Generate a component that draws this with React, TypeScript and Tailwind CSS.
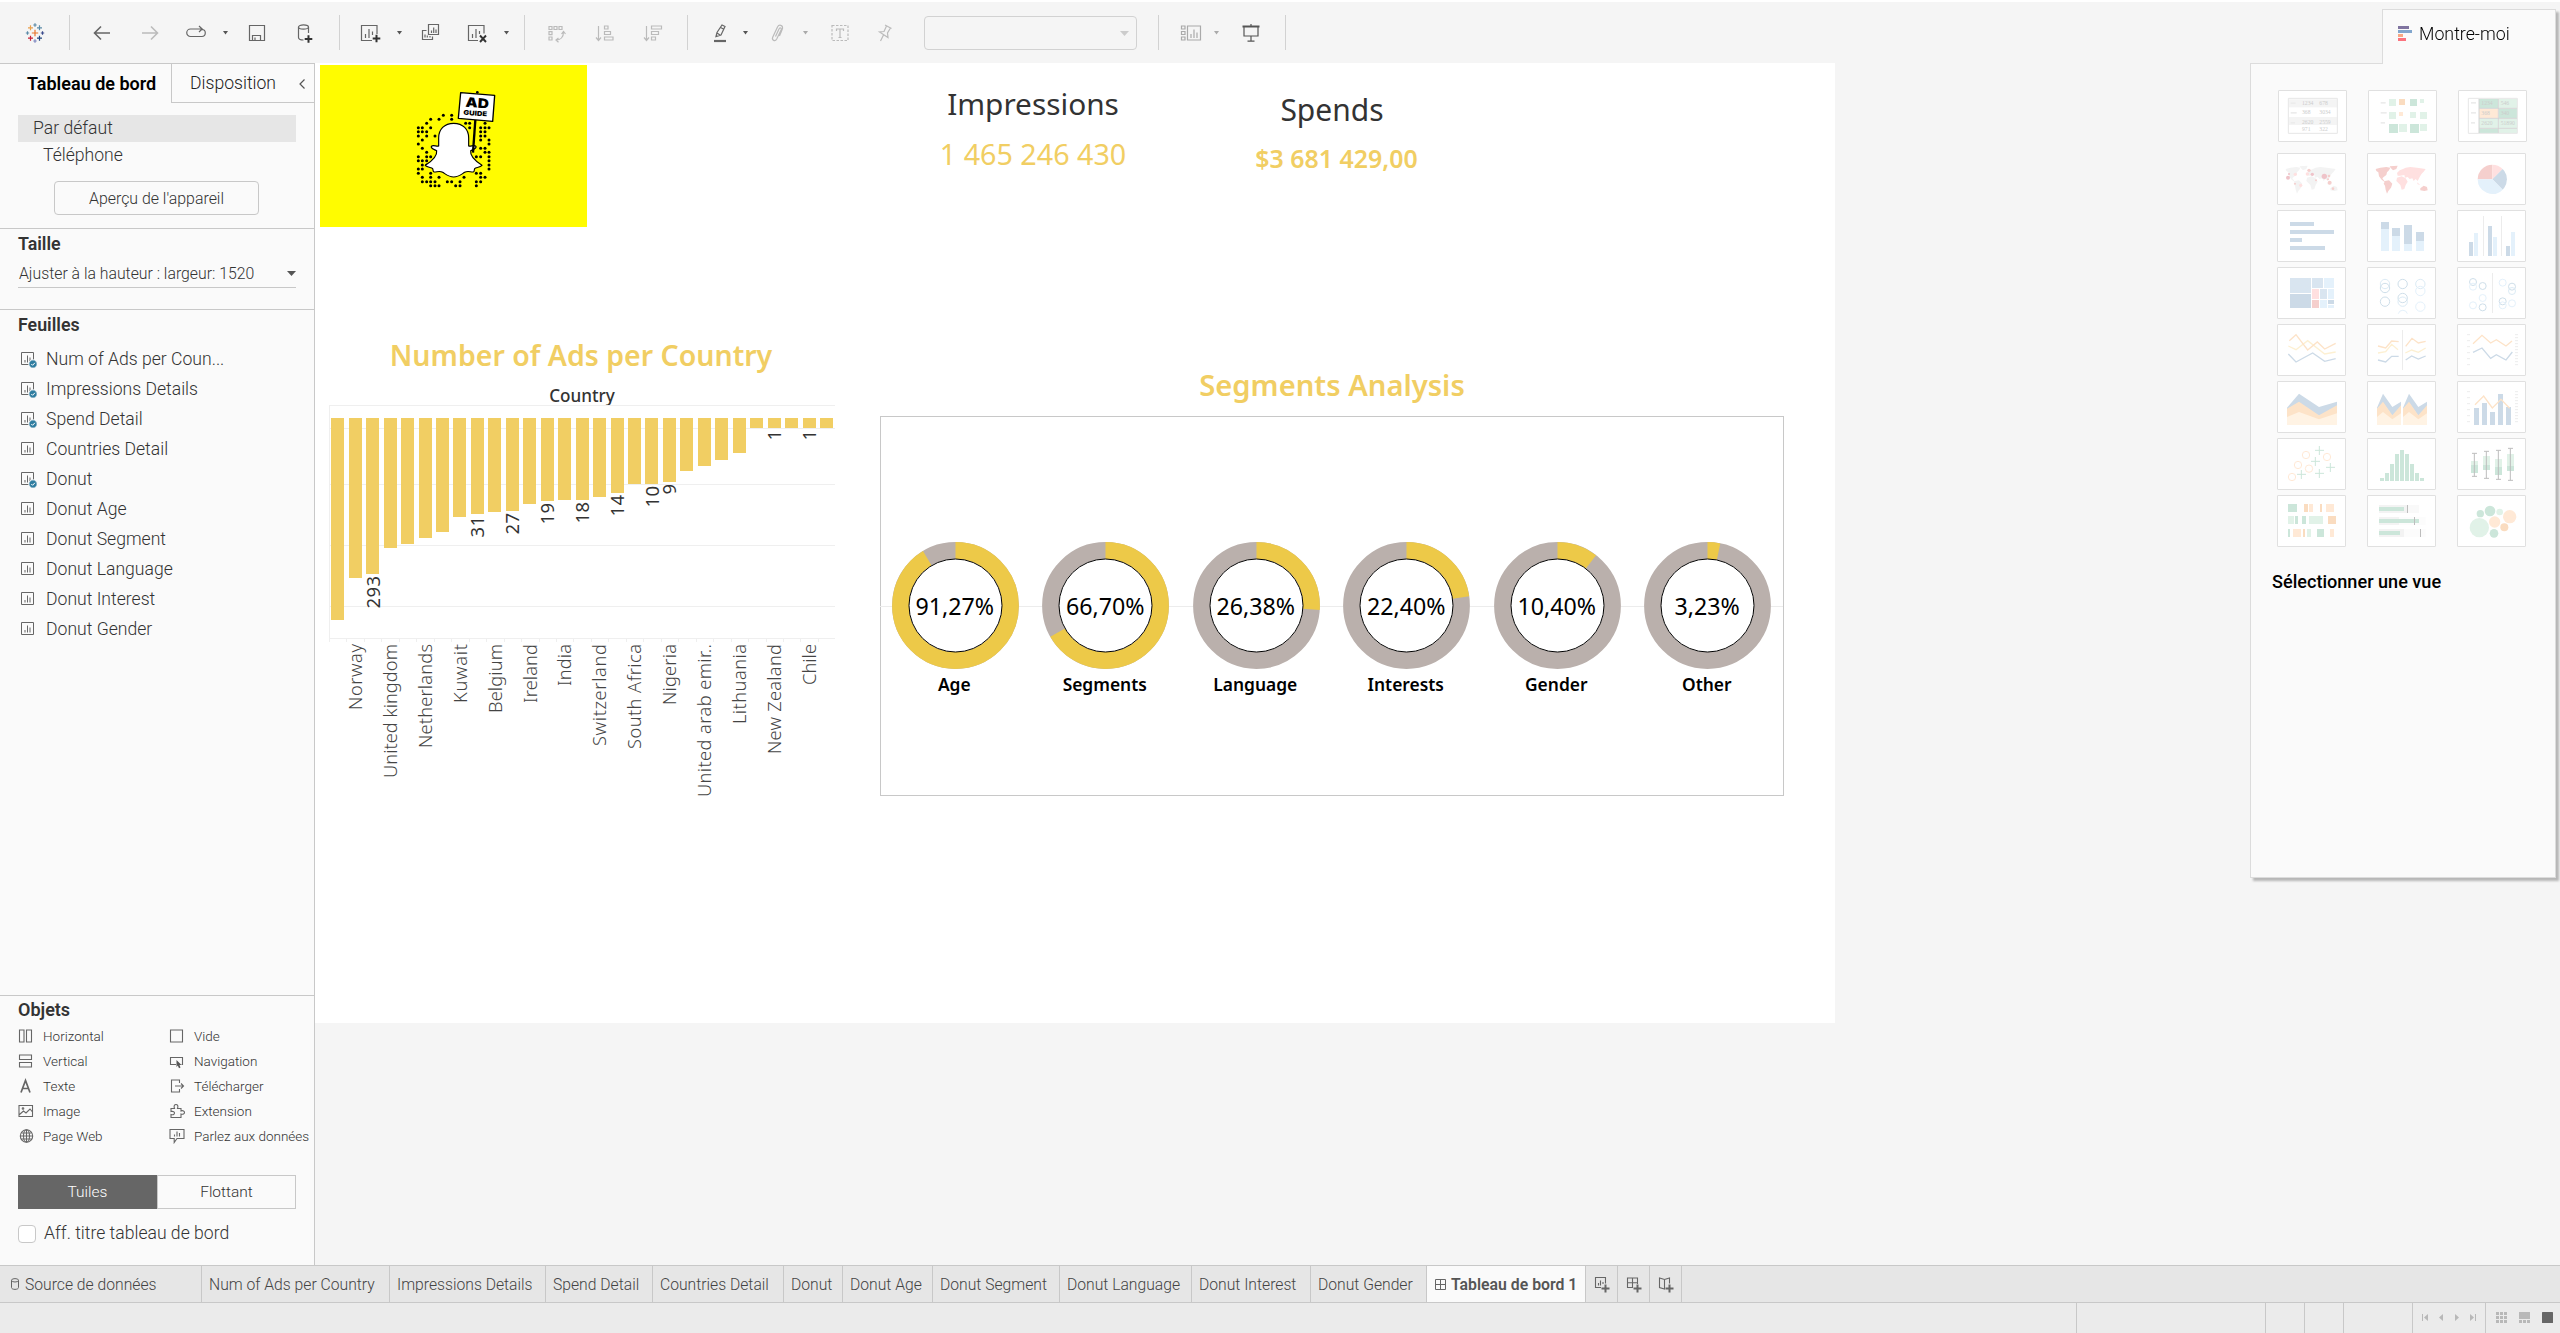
import React from "react";

type Kids = { children?: React.ReactNode };

/* ---------- toolbar ---------- */

const Sep = ({ className }: { className: string }) => (
  <div className={`h-[35px] w-px shrink-0 bg-[#d2d2d2] ${className}`} />
);

const Caret = ({ className, color = "#555" }: { className: string; color?: string }) => (
  <svg className={`h-1 w-[7px] shrink-0 ${className}`} viewBox="0 0 7 4">
    <path d="M1 0h5L3.5 3.6z" fill={color} />
  </svg>
);

function Ico({ className, w = 20, color = "#666", children }: Kids & { className: string; w?: number; color?: string }) {
  return (
    <svg
      className={`shrink-0 ${className}`}
      width={w}
      height={20}
      viewBox={`0 0 ${w} 20`}
      fill="none"
      stroke={color}
      strokeWidth={1.2}
    >
      {children}
    </svg>
  );
}

const plus = (x: number, y: number, r: number) => `M${x - r} ${y}h${2 * r}M${x} ${y - r}v${2 * r}`;

function Toolbar() {
  return (
    <div className="flex h-[61px] items-center bg-[#f5f5f5]">
      <Ico className="ml-[25px]">
        <path d={plus(10, 10, 3.2)} stroke="#e8762d" />
        <path d={plus(5.5, 4.8, 2.5)} stroke="#e9a04d" />
        <path d={plus(14.5, 4.8, 2.5)} stroke="#5b8ba8" />
        <path d={plus(5.5, 15.2, 2.5)} stroke="#c72035" />
        <path d={plus(14.5, 15.2, 2.5)} stroke="#1f447e" />
        <path d={plus(10, 2, 1.7)} stroke="#5b8ba8" />
        <path d={plus(10, 18, 1.7)} stroke="#7c86c0" />
        <path d={plus(2.5, 10, 1.7)} stroke="#5b8ba8" />
        <path d={plus(17.5, 10, 1.7)} stroke="#3a4a8c" />
      </Ico>
      <Sep className="ml-[24px]" />
      <Ico className="ml-[22px]">
        <path d="M18 10H2.5M9 3.5L2.5 10L9 16.5" strokeWidth={1.6} />
      </Ico>
      <Ico className="ml-[28px]" color="#bbb">
        <path d="M2 10h15.500M11 3.500L17.500 10L11 16.500" strokeWidth={1.6} />
      </Ico>
      <Ico className="ml-[26px]">
        <path d="M5 13.500H4.500A3.500 3.500 0 0 1 4.500 6H16M13 3l3.200 3L13 9M16 6.500a3.500 3.500 0 0 1 -.5 7H5" />
      </Ico>
      <Caret className="ml-[16px]" />
      <Ico className="ml-[18px]">
        <path d="M2.500 2.500h15v15h-15zM5.500 17.500v-5h8v5M8 17v-2.500" />
      </Ico>
      <Ico className="ml-[28px]">
        <ellipse cx="8.500" cy="4" rx="5" ry="2.200" />
        <path d="M3.500 4v10.500c0 1.500 2 2.500 5 2.500M13.500 4v6" />
        <path d={plus(13.500, 16, 3.8)} strokeWidth={2} stroke="#333" />
      </Ico>
      <Sep className="ml-[24px]" />
      <Ico className="ml-[20px]" w={22}>
        <path d="M12 17.500H1.500v-15h15.500v8.500M5.500 15v-4M9 15V6M12.500 12V8.500" />
        <path d={plus(16.500, 15.500, 3.8)} strokeWidth={2} stroke="#333" />
      </Ico>
      <Caret className="ml-[14px]" />
      <Ico className="ml-[18px]">
        <path d="M7.500 1.500h10v10h-10zM10.500 10V7.500M12.700 10V4.500M15 10V6.500M5.500 7.500h-4v9h10v-3M4 14.500v-3M6.300 14.500v-2M9 14.500v-1.500" />
      </Ico>
      <Ico className="ml-[26px]" w={22}>
        <path d="M11 17.500H1.500v-15h15.500v8M5.500 15v-4M9 15V6M12.500 11V8" />
        <path d="M13 12.500l6 6.500M19 12.500l-6 6.500" strokeWidth={1.900} stroke="#333" />
      </Ico>
      <Caret className="ml-[14px]" />
      <Sep className="ml-[14px]" />
      <Ico className="ml-[22px]" color="#bbb">
        <path d="M2 3.500h3v3h-3zM7 3.500h3v3h-3zM12 3.500h3v3h-3zM2 8.700h3v3h-3zM2 14h3v3h-3zM16.500 9c0 5-3 8-7.500 8M14.500 11l2-2.500l2 2.500M11.500 15L9 17l2.500 2.300" />
      </Ico>
      <Ico className="ml-[28px]" color="#bbb">
        <path d="M3.500 3v14M1 14.500l2.500 3l2.500-3M9.500 3h3.500v3h-3.500zM9.500 8.500h6v3h-6zM9.500 14h8.500v3h-8.500z" />
      </Ico>
      <Ico className="ml-[28px]" color="#bbb">
        <path d="M3.500 3v14M1 14.500l2.500 3l2.500-3M8.500 3h10v3h-10zM8.500 8.500h7v3h-7zM8.500 14h4v3h-4z" />
      </Ico>
      <Sep className="ml-[24px]" />
      <Ico className="ml-[23px]" w={18}>
        <path d="M5 13.500l1-4L11 2l3 1.500l-4 8.500zM6 10l3 2M9.500 4.500l3 1.500" />
        <path d="M3 18h12" strokeWidth={2.200} />
      </Ico>
      <Caret className="ml-[13px]" />
      <Ico className="ml-[19px]" w={18} color="#bbb">
        <path d="M7.500 13.500L11 6c.8-2 2.800-1 2.200.8L8.700 16c-1.600 3-5.200 1.200-4-1.700L9.500 4c1.500-3 5.500-2 5 1.500c-.3 1.700-2 5-3 7.500" />
      </Ico>
      <Caret className="ml-[16px]" color="#aaa" />
      <Ico className="ml-[21px]" color="#bbb">
        <path d="M2 2.500h16v15h-16z" strokeDasharray="2.500 1.500" />
        <path d="M6.500 8V6h7v2M10 6v8.500M8.500 14.500h3" />
      </Ico>
      <Ico className="ml-[26px]" w={18} color="#bbb">
        <path d="M9 2l6.500 3.500M10.500 3L8 8.500L3.500 9l8.500 5.500l-.5-4.500l3-5M7.500 12L4.500 18" />
      </Ico>
      <div className="ml-[30px] mt-px flex h-[34px] w-[213px] items-center justify-end rounded-sm border border-[#d2d2d2] pr-[7px]">
        <svg className="h-[5px] w-[9px]" viewBox="0 0 9 5">
          <path d="M0 0h9L4.500 5z" fill="#ccc" />
        </svg>
      </div>
      <Sep className="ml-[21px]" />
      <Ico className="ml-[21px]" w={22} color="#aaa">
        <path d="M1.500 3h3.500v3h-3.500zM1.500 8.500h3.500v3h-3.500zM1.500 14h3.500v3h-3.500zM7.500 3h13v14h-13zM11 15v-4M14 15V6.500M17 15v-5.500" />
      </Ico>
      <Caret className="ml-[11px]" color="#aaa" />
      <Ico className="ml-[21px]" color="#555">
        <path d="M1.500 3.500h17" strokeWidth={2} />
        <path d="M10 1v2M3 4v9h14V4M10 13v5M6.500 18.200h7" />
      </Ico>
      <Sep className="ml-[24px]" />
    </div>
  );
}

/* ---------- left side ---------- */

const SheetIcon = ({ used }: { used?: boolean }) => (
  <svg className="mr-[9px] h-[18px] w-[17px] shrink-0" viewBox="0 0 17 18" fill="none" stroke="#666">
    <path d="M1.500 2.500h12v12h-12z" />
    <path d="M5 12.500v-2.500M7.500 12.500v-7M10 12.500v-5" />
    {used && (
      <>
        <circle cx="13" cy="14" r="4.200" fill="#2f7da0" stroke="#fafafa" />
        <path d="M11.300 14l1.300 1.300l2.300-2.500" stroke="#fff" />
      </>
    )}
  </svg>
);

const sheets: [string, boolean][] = [
  ["Num of Ads per Coun...", true],
  ["Impressions Details", true],
  ["Spend Detail", true],
  ["Countries Detail", false],
  ["Donut", true],
  ["Donut Age", false],
  ["Donut Segment", false],
  ["Donut Language", false],
  ["Donut Interest", false],
  ["Donut Gender", false],
];

function Obj({ label, children }: Kids & { label: string }) {
  return (
    <div className="flex h-[25px] items-center whitespace-nowrap">
      <svg className="mr-[7px] h-4 w-[18px] shrink-0" viewBox="0 0 18 16" fill="none" stroke="#666" strokeWidth="1.100">
        {children}
      </svg>
      {label}
    </div>
  );
}

function Sidebar() {
  return (
    <aside className="flex w-[315px] shrink-0 flex-col border-r border-t border-[#c8c8c8] bg-[#fafafa] text-[17.6px] font-light leading-none text-[#333]">
      <div className="flex h-[39px]">
        <div className="flex w-[171px] items-center pl-[27px] text-[18px] font-semibold text-black">Tableau de bord</div>
        <div className="flex flex-1 items-center border-b border-l border-[#c8c8c8] pl-[18px] pt-px text-[#222]">
          Disposition
          <svg className="ml-[23px] h-[10px] w-[6px]" viewBox="0 0 6 10" fill="none" stroke="#555" strokeWidth="1.200">
            <path d="M5.500 .5L1 5l4.500 4.500" />
          </svg>
        </div>
      </div>
      <div className="ml-[18px] mt-[12px] flex h-[27px] w-[278px] items-center bg-[#e6e6e6] pl-[15px]">Par défaut</div>
      <div className="flex h-[27px] items-center pl-[43px]">Téléphone</div>
      <div className="ml-[54px] mt-[12px] flex h-[34px] w-[205px] items-center justify-center rounded-sm border border-[#c8c8c8] pt-[2px] text-[15.900px]">
        Aperçu de l'appareil
      </div>
      <div className="mt-[13px] h-[81px] border-t border-[#c8c8c8] pl-[18px]">
        <div className="mt-[5px] flex h-[20px] items-center text-[17.800px] font-semibold">Taille</div>
        <div className="mt-[10px] flex h-[24px] w-[278px] items-center justify-between border-b border-[#c8c8c8] pb-[4px] text-[15.800px]">
          <span className="ml-px whitespace-nowrap">Ajuster à la hauteur : largeur: 1520</span>
          <svg className="h-[5px] w-[9px]" viewBox="0 0 9 5">
            <path d="M0 0h9L4.500 5z" fill="#555" />
          </svg>
        </div>
      </div>
      <div className="border-t border-[#c8c8c8]">
        <div className="ml-[18px] mt-[5px] flex h-[20px] items-center text-[17.800px] font-semibold">Feuilles</div>
        <div className="mt-[9px]">
          {sheets.map(([name, used]) => (
            <div key={name} className="flex h-[30px] items-center pl-[20px] leading-[24px]">
              <SheetIcon used={used} />
              {name}
            </div>
          ))}
        </div>
      </div>
      <div className="mt-auto h-[270px] border-t border-[#c8c8c8]">
        <div className="ml-[18px] mt-[4px] flex h-[20px] items-center text-[18px] font-semibold">Objets</div>
        <div className="flex pl-[18px] pt-[3px] text-[13.500px] leading-[18px]">
          <div className="w-[151px]">
            <Obj label="Horizontal">
              <path d="M1.500 2h4.500v12h-4.500zM8.500 2h5v12h-5z" />
            </Obj>
            <Obj label="Vertical">
              <path d="M1.500 2h12v4.500h-12zM1.500 9.500h12v4.500h-12z" />
            </Obj>
            <Obj label="Texte">
              <path d="M3 14.500L7.500 2.500L12 14.500M4.500 10.500h6" strokeWidth="1.700" />
            </Obj>
            <Obj label="Image">
              <path d="M1 2.500h13.500v11h-13.500zM1.500 11.500l4-3.500l2.500 2l4-4l2.500 3" />
              <circle cx="5" cy="5.500" r=".8" />
            </Obj>
            <Obj label="Page Web">
              <circle cx="8.500" cy="8" r="6.200" />
              <ellipse cx="8.500" cy="8" rx="3" ry="6.200" />
              <path d="M8.500 2v12M2.500 8h12M3.500 5h10M3.500 11h10" />
            </Obj>
          </div>
          <div>
            <Obj label="Vide">
              <path d="M1.500 2h12v12h-12z" />
            </Obj>
            <Obj label="Navigation">
              <path d="M7 11.500H1.500v-7h12v7h-1" />
              <path d="M7.500 7l5 5h-2l1 2.500l-1.500.7l-1.200-2.700l-1.300 1.500z" fill="#555" stroke="none" />
            </Obj>
            <Obj label="Télécharger">
              <path d="M10.500 5V2h-8v12h8v-3M6 8h8.500M12 5.500L14.500 8L12 10.500" />
            </Obj>
            <Obj label="Extension">
              <path d="M2 5.500h3.500c-1-2.500 0-4 1.500-4s2.500 1.500 1.500 4h3.500v2.500c2-.8 3.500 0 3.500 1.500s-1.500 2-3.500 1.500v3.500h-10v-3c2.500 .8 3.500-.5 3.500-1.500s-1-2-3.500-1.500z" />
            </Obj>
            <Obj label="Parlez aux données">
              <path d="M1 1.500h14v9h-7l-2.800 4v-4h-4.200zM5.500 8.500V6.500M8 8.500V3.500M10.500 8.500V5" />
            </Obj>
          </div>
        </div>
        <div className="ml-[18px] mt-[27px] flex h-[34px] w-[278px] text-[15.500px]">
          <div className="flex w-[139px] items-center justify-center bg-[#666] pt-px text-white">Tuiles</div>
          <div className="flex flex-1 items-center justify-center border border-[#c8c8c8] pt-px">Flottant</div>
        </div>
        <div className="ml-[18px] mt-[16px] flex h-[18px] items-center">
          <div className="mr-[8px] size-[18px] rounded-sm border border-[#c8c8c8] bg-white" />
          Aff. titre tableau de bord
        </div>
      </div>
    </aside>
  );
}

/* ---------- dashboard ---------- */

const dots: [number, number[]][] = [
  [166, [190, 215]],
  [178, [152, 177, 215]],
  [190, [140, 257, 269, 315]],
  [203, [115, 127, 152, 269, 302, 315, 327]],
  [215, [115, 127, 140, 302, 315]],
  [228, [115, 140, 165, 302, 315]],
  [240, [127, 302, 327]],
  [252, [115, 327]],
  [265, [127, 302, 315]],
  [277, [140, 315, 327]],
  [290, [115, 140, 152, 289, 302, 327]],
  [302, [115, 127, 140, 327]],
  [315, [127, 140, 327]],
  [327, [115, 127, 327]],
  [340, [115, 152, 289, 302]],
  [352, [127, 152, 177, 252, 302, 315]],
  [365, [127, 140, 152, 165, 202, 215, 240, 289, 302]],
  [377, [152, 165, 177, 227, 240, 289]],
];

const SnapLogo = () => (
  <svg className="h-[162px] w-[267px] bg-[#fffc00]" viewBox="-180 15 801 486">
    {dots.flatMap(([y, xs]) => xs.map((x) => <circle key={`${x}-${y}`} cx={x} cy={y} r="4.500" />))}
    <path
      d="M221 190C193 190 176 208 176 234L176 258C170 261 160 253 154 259C152 266 162 268 170 272C172 285 158 302 136 316C142 323 154 322 158 326C160 330 158 335 162 336C170 337 178 331 188 337C198 343 206 351 221 351C236 351 244 343 254 337C264 331 272 337 280 336C284 335 282 330 284 326C288 322 300 323 306 316C284 302 270 285 272 272C280 268 290 266 288 259C282 253 272 261 266 258L266 234C266 208 249 190 221 190Z"
      fill="#fff"
      stroke="#000"
      strokeWidth="3.500"
      strokeLinejoin="round"
    />
    <path d="M286 180L279 278" stroke="#000" strokeWidth="7" />
    <circle cx="292" cy="97" r="4" />
    <path d="M242 98L344 106L338 184L235 175Z" fill="#fff" stroke="#000" strokeWidth="4" strokeLinejoin="round" />
    <g transform="rotate(4 290 140)" fontWeight="900" textAnchor="middle" fontFamily="Inter, sans-serif" fill="#000">
      <text x="291" y="143" fontSize="40" textLength="70" lengthAdjust="spacingAndGlyphs">AD</text>
      <text x="287" y="167" fontSize="20" textLength="71" lengthAdjust="spacingAndGlyphs">GUIDE</text>
    </g>
  </svg>
);

const bars = [
  202, 160, 156, 130, 126, 120, 114, 99, 96, 94, 93, 86, 83, 82, 82, 79, 75, 66, 66, 64, 53, 48, 42, 35, 10, 10, 10, 10, 10,
];
const barLabels: Record<number, string> = {
  2: "293", 8: "31", 10: "27", 12: "19", 14: "18", 16: "14", 18: "10", 19: "9", 25: "1", 27: "1",
};
const countries: [number, string, number][] = [
  [1, "Norway", 66],
  [3, "United kingdom", 134],
  [5, "Netherlands", 104],
  [7, "Kuwait", 59],
  [9, "Belgium", 69],
  [11, "Ireland", 59],
  [13, "India", 42],
  [15, "Switzerland", 102],
  [17, "South Africa", 105],
  [19, "Nigeria", 61],
  [21, "United arab emir..", 153],
  [23, "Lithuania", 80],
  [25, "New Zealand", 110],
  [27, "Chile", 41],
];
const left = 331.2;
const pitch = 17.46;

function BarChart() {
  return (
    <svg className="ml-[14px] block h-[400px] w-[510px]" viewBox="329 405 510 400">
      <g stroke="#efefef">
        {[405.5, 428.5, 484.5, 545.5, 606.5, 638.5].map((y) => (
          <path key={y} d={`M329 ${y}H835`} />
        ))}
        <path d="M329.500 405V638" />
        {Array.from({ length: 29 }, (_, i) => (
          <path key={i} d={`M${Math.round(329 + i * pitch) + 0.5} 638v4`} />
        ))}
      </g>
      {bars.map((h, i) => (
        <rect key={i} x={Math.round(left + i * pitch)} y="418" width="13" height={h} fill="#f1ce63" />
      ))}
      <g fontSize="18.500" letterSpacing=".4" fill="#333" textAnchor="end">
        {Object.entries(barLabels).map(([k, t]) => {
          const x = left + Number(k) * pitch + 13.5;
          const y = 418 + bars[Number(k)] + 1.5;
          return (
            <text key={k} transform={`translate(${x} ${y}) rotate(-90)`}>
              {t}
            </text>
          );
        })}
      </g>
      <g fontSize="18.300" fontWeight="300" fill="#444" textAnchor="end">
        {countries.map(([i, name, length]) => (
          <text key={name} textLength={length} transform={`translate(${left + i * pitch + 13.3} 644) rotate(-90)`}>
            {name}
          </text>
        ))}
      </g>
    </svg>
  );
}

const donuts: [string, string, number][] = [
  ["Age", "91,27%", 0.9127],
  ["Segments", "66,70%", 0.667],
  ["Language", "26,38%", 0.261],
  ["Interests", "22,40%", 0.226],
  ["Gender", "10,40%", 0.104],
  ["Other", "3,23%", 0.0323],
];

function Donut({ label, text, value }: { label: string; text: string; value: number }) {
  const c = 2 * Math.PI * 55;
  return (
    <div className="flex flex-1 flex-col items-center">
      <div className="relative flex size-[127px] items-center justify-center">
        <svg className="absolute inset-0 size-full" viewBox="-63.500 -63.500 127 127" fill="none">
          <circle r="55" stroke="#bab0ac" strokeWidth="16.800" />
          <circle
            r="55"
            stroke="#edc948"
            strokeWidth="16.800"
            strokeDasharray={`${value * c} ${c}`}
            transform="rotate(-90)"
          />
          <circle r="46.500" stroke="#000" fill="#fff" />
        </svg>
        <span className="relative pr-px pt-[2px] text-[23.200px] leading-none text-black">{text}</span>
      </div>
      <div className="mt-[3px] pr-[2px] text-[17.400px] font-semibold leading-[24px] text-black">{label}</div>
    </div>
  );
}

function Dashboard() {
  return (
    <main className="h-[960px] w-[1520px] bg-white px-[5px] font-['Noto_Sans',sans-serif] leading-none">
      <div className="flex h-[274px] pt-[2px]">
        <SnapLogo />
        <div className="ml-[346px] mt-[19px] flex w-[200px] flex-col items-center whitespace-nowrap">
          <div className="flex h-[40px] items-center text-[29.800px] text-[#333]">Impressions</div>
          <div className="mt-[10px] flex h-[40px] items-center text-[28.700px] text-[#f1ce63]">1 465 246 430</div>
        </div>
        <div className="ml-[98px] mt-[25px] flex w-[210px] flex-col items-center whitespace-nowrap">
          <div className="flex h-[40px] items-center pr-2 text-[30px] text-[#333]">Spends</div>
          <div className="mt-[10px] flex h-[36px] items-center pl-px text-[24.900px] font-semibold text-[#f1ce63]">
            $3 681 429,00
          </div>
        </div>
      </div>
      <div className="flex">
        <section className="w-[520px] whitespace-nowrap">
          <div className="flex h-[36px] items-center justify-center pl-[2px] text-[28.500px] font-semibold text-[#f1ce63]">
            Number of Ads per Country
          </div>
          <div className="ml-1 mt-[12px] flex h-[20px] items-center justify-center pt-px text-[17.100px] font-medium text-[#333]">
            Country
          </div>
          <div className="-ml-[5px]">
            <BarChart />
          </div>
        </section>
        <section className="ml-[40px] w-[904px] whitespace-nowrap">
          <div className="mt-[29px] flex h-[40px] items-center justify-center text-[29.200px] font-semibold text-[#f1ce63]">
            Segments Analysis
          </div>
          <div className="mt-[10px] h-[380px] border border-[#c8c8c8] pt-[125px]">
            <div className="-ml-px flex bg-[linear-gradient(#ececec,#ececec)] bg-[length:100%_1px] bg-[position:0_64px] bg-no-repeat">
              {donuts.map(([label, text, value]) => (
                <Donut key={label} label={label} text={text} value={value} />
              ))}
            </div>
          </div>
        </section>
      </div>
    </main>
  );
}

/* ---------- show-me panel ---------- */

function Thumb({ children }: Kids) {
  return (
    <div className="h-[52px] w-[69px] rounded-[1px] border border-[#e0e0e0] bg-white">
      <svg className="h-[50px] w-[67px]" viewBox="3 3 201 150" fill="none">
        {children}
      </svg>
    </div>
  );
}

type R = [number, number, number, number, string];
const Rects = ({ r }: { r: R[] }) => (
  <>
    {r.map(([x, y, w, h, f], i) => (
      <rect key={i} x={x} y={y} width={w} height={h} fill={f} />
    ))}
  </>
);
type C = [number, number, number, string];
const Circles = ({ c, fill }: { c: C[]; fill?: boolean }) => (
  <>
    {c.map(([x, y, r, f], i) => (
      <circle key={i} cx={x} cy={y} r={r} fill={fill ? f : "none"} stroke={fill ? "none" : f} strokeWidth="3" />
    ))}
  </>
);

const B1 = "#ccdae7";
const B2 = "#e4f1fb";
const G1 = "#cce6da";
const G2 = "#e1f2e8";
const O1 = "#fadcc0";
const O2 = "#ffe9d6";
const OL = "#fde3c8";
const YL = "#fdf0d2";
const P1 = "#f5cfcd";
const P2 = "#ffe0e0";
const N = "#ececec";

const World = ({ west, east }: { west: string; east: string }) => (
  <>
    <path
      d="M26 48L40 44L58 42L70 44L66 52L60 58L58 66L50 72L46 76L52 84L56 86L54 88L44 80L36 70L34 58L28 54ZM68 40L92 38L88 48L78 52L72 46ZM54 84L66 82L76 92L72 104L64 114L60 122L56 110L54 98L50 92Z"
      fill={west}
    />
    <path
      d="M90 60L98 52L108 48L116 44L130 42L150 44L176 48L170 56L164 62L158 72L152 84L146 78L140 84L136 76L128 78L122 72L114 74L112 66L100 68L92 68ZM90 74L104 70L116 76L122 86L116 96L112 108L104 110L100 96L88 84ZM150 88L160 96L152 94Z"
      fill={east}
    />
    <path d="M160 106L170 98L180 102L182 112L172 114L160 112Z" fill={west} />
  </>
);

const Ticks = () => (
  <path
    d="M30 32h9M30 50h9M30 68h9M30 86h9M30 104h9M30 122h9M174 32h9M174 41h9M174 50h9M174 59h9M174 68h9M174 77h9M174 86h9M174 95h9M174 104h9M174 113h9M174 122h9"
    stroke={N}
    strokeWidth="3"
  />
);

const tinyText = { fontSize: 17, fontFamily: "Liberation Serif, serif", fill: "#ccc" };

function ShowMe() {
  return (
    <div className="absolute right-[4px] top-[9px] flex w-[306px] flex-col text-black drop-shadow-[3px_3px_1px_rgba(0,0,0,0.25)]">
      <div className="z-10 -mb-px ml-[132px] flex h-[55px] items-center border border-b-0 border-[#dcdcdc] bg-[#fafafa] pb-[7px] pl-[15px] text-[17.800px] font-light leading-none">
        <svg className="mr-[6px] h-[15px] w-[15px]" viewBox="0 0 15 15">
          <Rects r={[[0, 0, 11, 3, "#8074a0"], [0, 4, 14, 3, "#82a6cd"], [0, 8, 5, 3, "#f8a884"], [0, 12, 8, 3, "#fb737e"]]} />
        </svg>
        Montre-moi
      </div>
      <div className="h-[815px] border border-[#dcdcdc] bg-[#fafafa] pt-[26px]">
        <div className="ml-[27px] flex gap-[21px]">
          <Thumb>
            <Rects r={[[33, 28, 144, 24, "#f4f4f4"], [33, 81, 144, 24, "#f4f4f4"]]} />
            <path d="M31 25h147v105h-147z" stroke="#e6e6e6" strokeWidth="3" />
            <Rects r={[[38, 37, 15, 5, N], [38, 66, 18, 5, N], [38, 96, 13, 5, N]]} />
            <g {...tinyText}>
              <text x="72" y="46">1234</text>
              <text x="124" y="46">678</text>
              <text x="72" y="73">368</text>
              <text x="124" y="73">3034</text>
              <text x="72" y="101">2620</text>
              <text x="124" y="101">2559</text>
              <text x="72" y="124">971</text>
              <text x="124" y="124">322</text>
            </g>
          </Thumb>
          <Thumb>
            <Rects
              r={[
                [38, 36, 15, 5, N], [38, 66, 18, 5, N], [38, 96, 13, 5, N],
                [63, 27, 21, 21, G2], [93, 27, 18, 18, O1], [126, 27, 21, 21, G1], [156, 27, 12, 12, G2],
                [63, 66, 21, 21, G2], [93, 66, 12, 12, O2], [126, 66, 18, 18, G2], [156, 66, 21, 21, G2],
                [63, 102, 27, 27, G1], [93, 102, 24, 24, G2], [126, 102, 27, 27, G1], [156, 102, 21, 21, G2],
              ]}
            />
          </Thumb>
          <Thumb>
            <Rects
              r={[
                [63, 27, 57, 27, G1], [123, 27, 54, 27, G2], [63, 57, 57, 27, O2], [123, 57, 54, 27, G1],
                [63, 87, 57, 27, G2], [123, 87, 54, 27, G2], [63, 117, 57, 12, G1], [123, 117, 54, 12, G2],
                [39, 36, 15, 5, N], [39, 66, 15, 5, N], [39, 96, 12, 5, N],
              ]}
            />
            <path d="M31 25h147v105h-147z" stroke="#e6e6e6" strokeWidth="3" />
            <path d="M63 27v102M121 27v102M63 55h114M63 85h114M63 115h114" stroke="#d4d4d4" strokeWidth="3" />
            <g {...tinyText}>
              <text x="70" y="46">1234</text>
              <text x="128" y="46">546</text>
              <text x="70" y="76">368</text>
              <text x="128" y="76">340</text>
              <text x="70" y="106">2620</text>
              <text x="128" y="106">51890</text>
            </g>
          </Thumb>
        </div>
        <div className="ml-[26px] mt-[11px] grid w-[249px] grid-cols-3 gap-x-[21px] gap-y-[5px]">
          <Thumb>
            <World west="#f3f3f3" east="#f3f3f3" />
            <Circles
              fill
              c={[
                [33, 74, 6, "#efc3c9"], [36, 63, 3, "#efc3c9"], [55, 64, 5, P2], [96, 52, 5, P1], [91, 63, 5, P2],
                [106, 64, 5, "#efc3c9"], [142, 70, 8, "#efc3c9"], [156, 69, 4, P1], [117, 82, 3, P1], [153, 79, 3, P1],
                [158, 89, 6, P1], [54, 92, 3, P1], [71, 97, 5, P2], [168, 107, 4, P1],
              ]}
            />
          </Thumb>
          <Thumb>
            <World west={P1} east={P2} />
          </Thumb>
          <Thumb>
            <path d="M106 79V35A44 44 0 0 0 62 79Z" fill={P1} />
            <path d="M106 79V35A44 44 0 0 1 137 48Z" fill={P2} />
            <path d="M106 79L137 48A44 44 0 0 1 137 110Z" fill={B1} />
            <path d="M106 79L137 110A44 44 0 0 1 62 79Z" fill={B2} />
          </Thumb>

          <Thumb>
            <Rects r={[[39, 36, 72, 12, B1], [39, 60, 132, 12, B1], [39, 84, 36, 12, B1], [39, 108, 105, 12, B1]]} />
          </Thumb>
          <Thumb>
            <Rects
              r={[
                [42, 36, 24, 21, B1], [42, 57, 24, 66, B2], [75, 54, 24, 24, B1], [75, 78, 24, 45, B2],
                [111, 45, 24, 57, B1], [111, 102, 24, 21, B2], [147, 66, 24, 27, B1], [147, 93, 24, 30, B2],
              ]}
            />
          </Thumb>
          <Thumb>
            <Rects
              r={[
                [36, 96, 12, 42, B1], [51, 69, 12, 69, B2], [78, 18, 3, 120, N], [93, 48, 12, 90, B1],
                [108, 81, 12, 57, B2], [132, 18, 3, 120, N], [147, 108, 12, 30, B1], [162, 66, 12, 72, B2],
              ]}
            />
          </Thumb>

          <Thumb>
            <Rects
              r={[
                [39, 33, 63, 45, "#d9e5f0"], [39, 81, 63, 42, B1], [105, 33, 33, 30, "#d9e5f0"], [141, 33, 30, 30, B2],
                [105, 66, 21, 30, P2], [129, 66, 21, 30, "#d9e5f0"], [153, 66, 18, 30, B2], [105, 99, 21, 24, P1],
                [129, 99, 21, 24, B2], [153, 99, 18, 12, B1], [153, 114, 18, 9, B2],
              ]}
            />
          </Thumb>
          <Thumb>
            <Circles
              c={[
                [54, 51, 14, "#dcebf5"], [54, 63, 14, "#cfdfea"], [54, 104, 14, "#cfdfea"], [107, 51, 14, "#cfdfea"],
                [107, 93, 14, "#cfdfea"], [107, 104, 14, "#dcebf5"], [160, 51, 14, "#dcebf5"], [160, 72, 14, B2],
                [160, 119, 14, B2],
              ]}
            />
            <path d="M94 140a14 14 0 0 1 27 0" stroke={B2} strokeWidth="3" />
          </Thumb>
          <Thumb>
            <Circles
              c={[
                [48, 45, 10.500, "#cfdfea"], [48, 59, 10.500, B2], [77, 57, 10.500, "#cfdfea"], [77, 93, 10.500, B2],
                [48, 115, 10.500, B2], [77, 121, 10.500, "#cfdfea"], [137, 47, 10.500, B2], [165, 59, 10.500, "#cfdfea"],
                [165, 72, 10.500, "#dcebf5"], [137, 103, 10.500, "#cfdfea"], [137, 115, 10.500, B2], [165, 109, 10.500, B2],
              ]}
            />
            <Rects r={[[105, 18, 3, 120, N]]} />
          </Thumb>

          <Thumb>
            <g strokeWidth="4">
              <path d="M34 66L57 77L92 50L143 90L176 84" stroke={YL} />
              <path d="M37 50L57 32L92 78L121 54L143 75L176 58" stroke={OL} />
              <path d="M34 90L57 114L107 87L143 112L176 104" stroke={B1} />
            </g>
          </Thumb>
          <Thumb>
            <g strokeWidth="4">
              <path d="M33 87L56 83L74 61L93 77M115 87L134 78L154 85L176 72" stroke={YL} />
              <path d="M33 66L56 72L74 51L95 53M116 67L135 43L154 57L176 52" stroke={OL} />
              <path d="M33 108L56 114L74 97L95 97M116 108L134 96L154 105L176 96" stroke={B1} />
            </g>
            <Rects r={[[105, 18, 3, 120, N]]} />
          </Thumb>
          <Thumb>
            <Ticks />
            <g strokeWidth="4">
              <path d="M48 59L75 34L101 57L118 47L147 66L165 51" stroke={OL} />
              <path d="M48 85L75 72L101 103L118 92L147 108L166 84" stroke={B1} />
            </g>
          </Thumb>

          <Thumb>
            <path d="M30 80L66 38L126 78L180 62V80L126 105L66 65L30 85Z" fill={B1} />
            <path d="M30 83L66 62L126 103L180 73V132H30Z" fill={OL} />
            <path d="M30 108L66 93L126 115L180 97V132H30Z" fill="#fff3e4" />
          </Thumb>
          <Thumb>
            {[0, 78].map((dx) => (
              <g key={dx} transform={`translate(${dx} 0)`}>
                <path d="M30 80L48 38L76 78L102 62V80L76 105L48 65L30 85Z" fill={B1} />
                <path d="M30 83L48 62L76 103L102 73V132H30Z" fill={OL} />
                <path d="M30 108L48 93L76 115L102 97V132H30Z" fill="#fff3e4" />
              </g>
            ))}
          </Thumb>
          <Thumb>
            <Ticks />
            <Rects r={[[51, 81, 15, 51, B1], [75, 66, 15, 66, B1], [99, 93, 15, 39, B1], [123, 39, 15, 93, B1], [147, 78, 15, 54, B1]]} />
            <path d="M54 71L80 45L106 81L132 55L158 82" stroke={OL} strokeWidth="4" />
          </Thumb>

          <Thumb>
            <Circles c={[[87, 51, 11, O2], [150, 57, 11, O2], [63, 81, 11, O2], [96, 92, 11, O2], [45, 117, 11, O2]]} />
            <path
              d="M114 37h27M127 24v27M102 70h27M115 57v27M147 88h27M160 75v27M60 109h27M73 96v27M114 106h27M127 93v27"
              stroke={G1}
              strokeWidth="3"
            />
          </Thumb>
          <Thumb>
            <Rects
              r={[
                [39, 120, 12, 9, G1], [54, 105, 12, 24, G1], [69, 78, 12, 51, G1], [84, 48, 12, 81, G1], [99, 36, 12, 93, G1],
                [114, 48, 12, 81, G1], [129, 78, 12, 51, G1], [144, 105, 12, 24, G1], [159, 120, 12, 9, G1],
              ]}
            />
          </Thumb>
          <Thumb>
            <Rects
              r={[
                [42, 69, 21, 12, G2], [42, 81, 21, 24, G1], [78, 54, 21, 27, G2], [78, 81, 21, 15, G1],
                [114, 63, 21, 24, G2], [114, 87, 21, 24, G1], [150, 48, 21, 36, G2], [150, 84, 21, 15, G1],
              ]}
            />
            <path
              d="M45 46h15M52 46v69M45 115h15M81 40h15M88 40v81M81 121h15M117 37h15M124 37v87M117 124h15M153 31h15M160 31v96M153 127h15"
              stroke="#bdbdbd"
              strokeWidth="3"
            />
          </Thumb>

          <Thumb>
            <Rects
              r={[
                [33, 27, 27, 24, G1], [81, 27, 12, 24, O1], [96, 27, 12, 24, O2], [129, 27, 6, 24, O1], [147, 27, 24, 24, O2],
                [33, 63, 18, 24, G2], [54, 63, 9, 24, G1], [75, 63, 12, 24, G1], [96, 63, 42, 24, G2], [153, 63, 24, 24, O1],
                [33, 102, 6, 24, G1], [48, 102, 24, 24, O2], [78, 102, 6, 24, O1], [90, 102, 12, 24, G2],
                [120, 102, 21, 24, G1], [159, 102, 12, 24, O2],
              ]}
            />
          </Thumb>
          <Thumb>
            <Rects
              r={[
                [36, 30, 120, 24, "#f9f9f9"], [36, 30, 85, 24, "#f3f3f3"], [36, 66, 140, 24, "#fcfcfc"], [36, 66, 60, 24, "#f3f3f3"],
                [36, 102, 140, 24, "#fcfcfc"], [36, 102, 75, 24, "#f3f3f3"],
                [36, 36, 75, 12, G1], [36, 72, 120, 12, G1], [36, 108, 63, 12, G1],
                [120, 30, 3, 24, "#bdbdbd"], [141, 66, 3, 24, "#bdbdbd"], [159, 102, 3, 24, "#bdbdbd"],
              ]}
            />
          </Thumb>
          <Thumb>
            <Circles
              fill
              c={[
                [67, 98, 29, G2], [70, 56, 11, G1], [99, 48, 16, G1], [128, 51, 10, G2], [113, 81, 17, O2],
                [158, 65, 20, O2], [142, 97, 12, O1], [111, 115, 13, G1],
              ]}
            />
          </Thumb>
        </div>
        <div className="ml-[21px] mt-[23px] text-[18.100px] font-medium leading-[24px]">Sélectionner une vue</div>
      </div>
    </div>
  );
}

/* ---------- bottom ---------- */

const Tab = ({ w, label }: { w: string; label: string }) => (
  <div className={`flex items-center border-r border-[#c8c8c8] pl-[7px] pt-[2px] ${w}`}>{label}</div>
);

function NewIcon({ children }: Kids) {
  return (
    <div className="flex w-[32px] items-center justify-center border-r border-[#c8c8c8] pt-px">
      <svg className="h-4 w-4" viewBox="0 0 16 16" fill="none" stroke="#666" strokeWidth="1.100">
        {children}
        <path d="M7.500 11.500h8M11.500 7.500v8" strokeWidth="2" />
      </svg>
    </div>
  );
}

function BottomTabs() {
  return (
    <div className="flex h-[38px] whitespace-nowrap border-y border-[#c8c8c8] bg-[#e6e6e6] text-[15.700px] font-light leading-none text-[#444]">
      <div className="flex w-[202px] items-center border-r border-[#c8c8c8] pl-[11px] pt-[2px]">
        <svg className="-mt-[3px] mr-[6px] h-3 w-2" viewBox="0 0 8 12" fill="none" stroke="#666">
          <path d="M.5 2.500v7c0 2.500 7 2.500 7 0v-7" />
          <ellipse cx="4" cy="2.300" rx="3.500" ry="1.700" />
        </svg>
        Source de données
      </div>
      <Tab w="w-[188px]" label="Num of Ads per Country" />
      <Tab w="w-[156px]" label="Impressions Details" />
      <Tab w="w-[107px]" label="Spend Detail" />
      <Tab w="w-[131px]" label="Countries Detail" />
      <Tab w="w-[59px]" label="Donut" />
      <Tab w="w-[90px]" label="Donut Age" />
      <Tab w="w-[127px]" label="Donut Segment" />
      <Tab w="w-[132px]" label="Donut Language" />
      <Tab w="w-[119px]" label="Donut Interest" />
      <Tab w="w-[116px]" label="Donut Gender" />
      <div className="flex w-[159px] items-center border-r border-[#c8c8c8] bg-[#fafafa] pl-[8px] pt-px text-[15.800px] font-semibold text-[#555]">
        <svg className="-mt-px mr-[5px] size-[11px]" viewBox="0 0 11 11" fill="none" stroke="#666">
          <path d="M.5 .5h10v10h-10zM5.500 .5v10M.5 5.500h10" />
        </svg>
        Tableau de bord 1
      </div>
      <NewIcon>
        <path d="M7 10.500H1.500v-10h10v6M4.500 8.500V6M6.500 8.500V3.500M9 7V5" />
      </NewIcon>
      <NewIcon>
        <path d="M7 10.500H1.500v-9.500h10v6M6.500 1v9.500M1.500 5.800h10" />
      </NewIcon>
      <NewIcon>
        <path d="M11.500 6.500V1L6.500 2.500L1.500 1v9.500l5 1.500V2.500" />
      </NewIcon>
    </div>
  );
}

function StatusBar() {
  return (
    <div className="flex h-[30px] items-stretch justify-end bg-[#ebebeb]">
      <div className="w-[189px] border-l border-[#c8c8c8]" />
      <div className="w-[39px] border-l border-[#c8c8c8]" />
      <div className="w-[39px] border-l border-[#c8c8c8]" />
      <div className="w-[69px] border-l border-[#c8c8c8]" />
      <div className="flex w-[73px] border-l border-[#c8c8c8] pl-[9px] pt-[11px]">
        <svg className="h-[7px] w-[55px]" viewBox="0 0 55 7" fill="#b8b8b8">
          <path d="M0 0h1v7H0zM6 0v7L2 3.500zM21 0v7L17 3.500zM33 0v7L37 3.500zM48 0v7L52 3.500zM53 0h1v7h-1z" />
        </svg>
      </div>
      <div className="flex w-[75px] gap-[12px] border-l border-[#c8c8c8] pl-[10px] pt-[9px]">
        <svg className="size-[11px]" viewBox="0 0 11 11" fill="#b8b8b8">
          {[0, 4, 8].flatMap((x) => [0, 4, 8].map((y) => <rect key={`${x}${y}`} x={x} y={y} width="3" height="3" />))}
        </svg>
        <svg className="size-[11px]" viewBox="0 0 11 11" fill="#b8b8b8">
          <path d="M0 0h11v7H0zM0 8h3v3H0zM4 8h3v3H4zM8 8h3v3H8z" />
        </svg>
        <svg className="size-[11px]" viewBox="0 0 11 11" fill="#666">
          <rect width="11" height="11" rx=".5" />
        </svg>
      </div>
    </div>
  );
}

export default function App() {
  return (
    <div className="relative flex h-[1333px] w-[2560px] flex-col overflow-hidden bg-[#f5f5f5] pt-[2px] font-['Roboto',sans-serif] before:absolute before:inset-x-0 before:top-0 before:h-[2px] before:bg-white">
      <Toolbar />
      <div className="flex h-[1202px]">
        <Sidebar />
        <Dashboard />
      </div>
      <BottomTabs />
      <StatusBar />
      <ShowMe />
    </div>
  );
}
